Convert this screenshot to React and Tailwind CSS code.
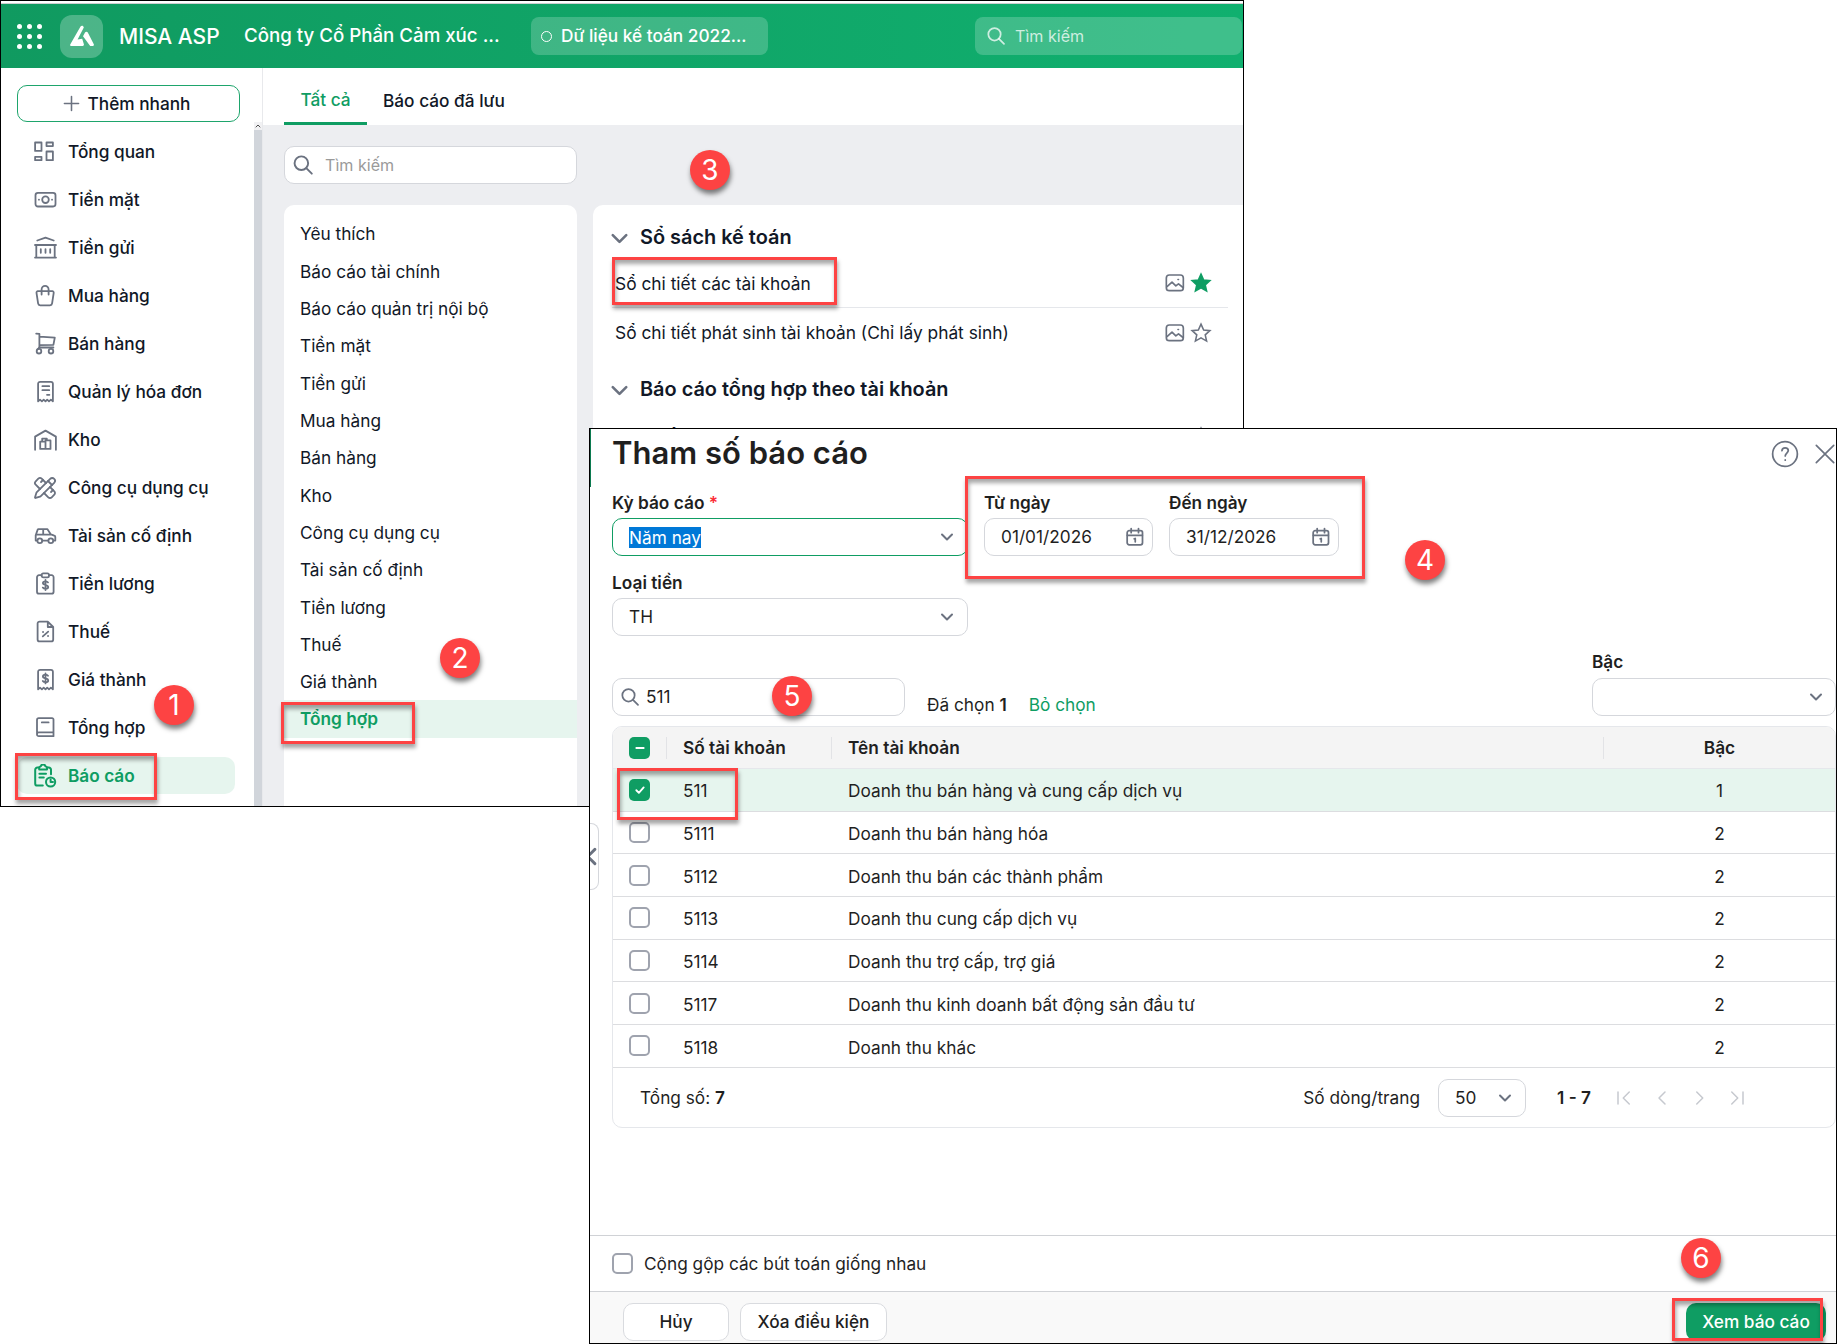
import { ChevronDown, PencilRuler } from "lucide-react";
import clsx from "clsx";

const REPORT_GROUPS = [
    "Yêu thích",
    "Báo cáo tài chính",
    "Báo cáo quản trị nội bộ",
    "Tiền mặt",
    "Tiền gửi",
    "Mua hàng",
    "Bán hàng",
    "Kho",
    "Công cụ dụng cụ",
    "Tài sản cố định",
    "Tiền lương",
    "Thuế",
    "Giá thành",
    "Tổng hợp"
];

const ACCOUNTS = [
    { code: "511", name: "Doanh thu bán hàng và cung cấp dịch vụ", level: 1, checked: true },
    { code: "5111", name: "Doanh thu bán hàng hóa", level: 2 },
    { code: "5112", name: "Doanh thu bán các thành phẩm", level: 2 },
    { code: "5113", name: "Doanh thu cung cấp dịch vụ", level: 2 },
    { code: "5114", name: "Doanh thu trợ cấp, trợ giá", level: 2 },
    { code: "5117", name: "Doanh thu kinh doanh bất động sản đầu tư", level: 2 },
    { code: "5118", name: "Doanh thu khác", level: 2 }
];

function Glyph({ children, className = "size-6", strokeWidth = 1.8 }) {
    return (
        <svg
            viewBox="0 0 24 24"
            fill="none"
            stroke="currentColor"
            strokeWidth={strokeWidth}
            strokeLinecap="round"
            strokeLinejoin="round"
            className={clsx("shrink-0", className)}
        >
            {children}
        </svg>
    );
}

const DOLLAR = "M15 9.6c-.5-.8-1.4-1.1-2.5-1.1-1.5 0-2.6.7-2.6 1.8 0 2.6 5.3 1.2 5.3 3.9 0 1.1-1.2 1.8-2.7 1.8-1.2 0-2.2-.4-2.7-1.2M12.5 7.2v10";
const TORN_PAPER = "M5.1 21.3V3.8a2 2 0 0 1 2-2h10.8a2 2 0 0 1 2 2v17.5l-2-1.7-1.9 1.7-1.8-1.7-1.7 1.7-1.8-1.7-1.8 1.7-1.9-1.7z";

const NAV_ITEMS = [
    {
        label: "Tổng quan",
        icon: (
            <Glyph>
                <path d="M2.1 2.5h6.4v8.4H2.1zM13.5 2.5h6.4v3.6h-6.4zM2.1 16.8h6.4v3.4H2.1zM13.5 11.5h6.4v8.7h-6.4z" />
            </Glyph>
        )
    },
    {
        label: "Tiền mặt",
        icon: (
            <Glyph>
                <rect x="2.5" y="4.9" width="20" height="13.6" rx="2.4" />
                <circle cx="12.5" cy="11.7" r="3.3" />
                <path d="M5.9 11.7h.1M19 11.7h.1" />
            </Glyph>
        )
    },
    {
        label: "Tiền gửi",
        icon: (
            <Glyph>
                <path d="M4.3 4.5l8.2-2.9 8.2 2.9M2 9h21M3.3 9v12.4M21.7 9v12.4M2 21.6h21M7.8 13.2v3.6M12.5 13.2v3.6M17.2 13.2v3.6" />
            </Glyph>
        )
    },
    {
        label: "Mua hàng",
        icon: (
            <Glyph>
                <path d="M4.8 7.2h14.6a1.4 1.4 0 0 1 1.3 1.6l-1.6 10.6a2.2 2.2 0 0 1-2.1 1.9H7.2a2.2 2.2 0 0 1-2.1-1.9L3.5 8.8a1.4 1.4 0 0 1 1.3-1.6z" />
                <path d="M8.6 10.6V5.4a3.5 3.5 0 0 1 7 0v5.2" />
            </Glyph>
        )
    },
    {
        label: "Bán hàng",
        icon: (
            <Glyph>
                <path d="M3.2 1.6l3.2.3v13.6h14M6.4 4.6l15.4 1-1.4 7.2-14 .3" />
                <path d="M6.4 15.5L4.6 17.3" />
                <circle cx="6" cy="19.2" r="2.3" />
                <circle cx="18" cy="19.2" r="2.3" />
            </Glyph>
        )
    },
    {
        label: "Quản lý hóa đơn",
        icon: (
            <Glyph>
                <path d={TORN_PAPER} />
                <path d="M9.4 6.2h6.8M9.4 10.2h6.8M14 14.8h2.4" />
            </Glyph>
        )
    },
    {
        label: "Kho",
        icon: (
            <Glyph>
                <path d="M2.1 21.8V8.6l10.4-6 10.4 6v13.2" />
                <path d="M7.2 13.6h5.3v7.3H7.2zM12.5 12.4h5v8.5h-5zM9.2 13.6v-3h4.6v1.8" />
            </Glyph>
        )
    },
    {
        label: "Công cụ dụng cụ",
        icon: <PencilRuler className="size-6 shrink-0" strokeWidth={1.8} />
    },
    {
        label: "Tài sản cố định",
        icon: (
            <Glyph>
                <path d="M4.2 16.6H2.7v-5.4l2-5.6a.8.8 0 0 1 .8-.5h8.8l3.6 5.3 3.4 1.2a1.4 1.4 0 0 1 1 1.4v3.6h-1.4M9.4 16.6h5.8M3 10.6h14.6M10.2 5.3v5.2" />
                <circle cx="6.8" cy="16.7" r="2.4" />
                <circle cx="17.8" cy="16.7" r="2.4" />
            </Glyph>
        )
    },
    {
        label: "Tiền lương",
        icon: (
            <Glyph>
                <path d="M8.6 3.2H6a2 2 0 0 0-2 2v14.5a2 2 0 0 0 2 2h12.6a2 2 0 0 0 2-2V5.2a2 2 0 0 0-2-2H16" />
                <rect x="8.6" y="1.4" width="7.4" height="4" rx="1.6" />
                <path d={DOLLAR} transform="translate(0 .8)" />
            </Glyph>
        )
    },
    {
        label: "Thuế",
        icon: (
            <Glyph>
                <path d="M14.8 1.6H6.6a2 2 0 0 0-2 2v15.8a2 2 0 0 0 2 2h11.6a2 2 0 0 0 2-2V7zM14.8 1.6V7h5.4M9.8 16.4l5.4-4.8M10 12h.1M15 16h.1" />
            </Glyph>
        )
    },
    {
        label: "Giá thành",
        icon: (
            <Glyph>
                <path d={TORN_PAPER} />
                <path d={DOLLAR} transform="translate(0 -1.8)" />
            </Glyph>
        )
    },
    {
        label: "Tổng hợp",
        icon: (
            <Glyph>
                <path d="M20.5 16.4V3.6a1.4 1.4 0 0 0-1.4-1.4H5.8A1.8 1.8 0 0 0 4 4v14.4a1.8 1.8 0 0 0 1.8 1.8h14.7v-3.8H5.6A1.7 1.7 0 0 0 4 18M8.8 6.4h6.8" />
            </Glyph>
        )
    },
    {
        label: "Báo cáo",
        active: true,
        icon: (
            <Glyph strokeWidth={2}>
                <path d="M6.2 3.6H4.4A2.2 2.2 0 0 0 2.2 5.8v13.6a2.2 2.2 0 0 0 2.2 2.2h5.4M14 3.6h1.8A2.2 2.2 0 0 1 18 5.8v4.4" />
                <path d="M6.2 4.6a2 2 0 0 1 1.6-2.4 2.4 2.4 0 0 1 4.6 0A2 2 0 0 1 14 4.6v.8H6.2zM6.4 9.8h6.6M6.4 13.6h4.4" />
                <circle cx="17.6" cy="18" r="4.6" />
                <path d="M17.6 15.6V18H20" />
            </Glyph>
        )
    }
];

function SearchIcon({ className }) {
    return (
        <Glyph className={className} strokeWidth={2.1}>
            <circle cx="10.2" cy="10" r="7.4" />
            <path d="M15.6 15.4l6 6" />
        </Glyph>
    );
}

function CalendarIcon() {
    return (
        <Glyph className="size-5 text-[#6b7280]" strokeWidth={2.1}>
            <rect x="2.6" y="4.4" width="18.4" height="17" rx="2.4" />
            <path d="M7.4 1.8v5M16.2 1.8v5M2.8 10h18M11 14.2l1.3-.4v4" />
        </Glyph>
    );
}

function PreviewIcon() {
    return (
        <Glyph className="size-5 text-[#6b7280]" strokeWidth={2}>
            <rect x="1.6" y="2.4" width="20.4" height="18.8" rx="3.6" />
            <path d="M2.4 16.4l6-5.4 4.6 4.4 3.2-2.4 5.4 4.4M15.6 7.8h.6" />
        </Glyph>
    );
}

function StarIcon({ filled }) {
    return (
        <Glyph className={filled ? "size-[22px] text-[#0f9d63]" : "size-[22px] text-[#6b7280]"} strokeWidth={1.7}>
            <path
                d="M12 2.4l2.9 6.3 6.8.7-5.1 4.6 1.5 6.8L12 17.3l-6.1 3.5 1.5-6.8-5.1-4.6 6.8-.7z"
                fill={filled ? "currentColor" : "none"}
                strokeLinejoin="miter"
            />
        </Glyph>
    );
}

function Checkbox({ state }) {
    if (!state) {
        return <span className="h-[21px] w-[21px] shrink-0 rounded-[5px] border-2 border-[#9fa3ae] bg-white" />;
    }
    return (
        <span className="flex h-[22px] w-[21px] shrink-0 items-center justify-center rounded-[5px] bg-[#0f9d63] text-white">
            <Glyph className="size-4" strokeWidth={2.8}>
                <path d={state === "mixed" ? "M6.5 12h11" : "M6.5 12.4l3.8 3.8 7.2-8"} />
            </Glyph>
        </span>
    );
}

function TopBar() {
    return (
        <header className="flex h-16 shrink-0 items-center bg-linear-to-r from-[#109a60] to-[#10b06f] text-white">
            <div className="ml-4 grid w-[25px] grid-cols-3 gap-[5px]">
                {Array.from({ length: 9 }, (_, i) => (
                    <span key={i} className="size-[5px] rounded-full bg-white" />
                ))}
            </div>
            <div className="ml-[18px] flex size-[43px] items-center justify-center rounded-xl bg-white/25">
                <svg viewBox="0 0 26 24" className="h-6 w-[26px]" fill="white">
                    <path d="M1.2 20.6L11.4 2.8c.7-1.3 2.7-1.3 3.2.2l.2.6-6.2 11.8 4.6-.6L14.8 20a1.3 1.3 0 0 1-1.2 1.9H2a.9.9 0 0 1-.8-1.3z" />
                    <path d="M14 12.2l2-3.6c.6-1.2 2.2-1.2 2.8 0l6 11.6c.4.8-.1 1.7-1 1.7h-2.6z" />
                </svg>
            </div>
            <span className="ml-4 w-[125px] pt-px text-[21px] font-medium">MISA ASP</span>
            <span className="w-[287px] text-[18.7px] font-medium whitespace-nowrap">Công ty Cổ Phần Cảm xúc ...</span>
            <div className="flex h-[38px] w-[237px] items-center gap-[9px] rounded-lg bg-white/20 pl-2.5 font-medium whitespace-nowrap">
                <span className="size-[11px] rounded-full border border-white" />
                Dữ liệu kế toán 2022...
            </div>
            <div className="mr-px ml-auto flex h-[38px] w-[267px] items-center gap-[9px] rounded-lg bg-white/20 pl-[11px] text-[16.1px] text-white/75">
                <SearchIcon className="size-5" />
                Tìm kiếm
            </div>
        </header>
    );
}

function Sidebar() {
    return (
        <aside className="flex w-[262px] shrink-0 flex-col border-r border-[#e8e9ec] bg-white">
            <button className="mt-[17px] ml-4 flex h-[37px] w-[223px] items-center justify-center gap-2 rounded-[10px] border border-[#1ea56c] pr-1 font-medium">
                <Glyph className="size-[17px] text-[#6b7280]" strokeWidth={2.2}>
                    <path d="M12 2v20M2 12h20" />
                </Glyph>
                Thêm nhanh
            </button>
            <div className="flex min-h-0 flex-1">
                <nav className="w-[253px] overflow-hidden pt-[11px] font-medium">
                    {NAV_ITEMS.map((item) => (
                        <a
                            key={item.label}
                            className={clsx(
                                "mb-[11px] ml-4 flex h-[37px] w-[218px] items-center gap-[11px] rounded-[10px] pl-4",
                                item.active && "bg-[#e6f5ee] font-semibold text-[#0f9d63]"
                            )}
                        >
                            <span className={item.active ? "text-[#0f9d63]" : "text-[#6b7280]"}>{item.icon}</span>
                            {item.label}
                        </a>
                    ))}
                </nav>
                <div className="w-2 bg-[#d1d5db]">
                    <div className="flex h-2 items-center justify-center bg-[#f1f1f3] text-[#505050]">
                        <Glyph className="size-1.5" strokeWidth={4}>
                            <path d="M4 16l8-8 8 8" />
                        </Glyph>
                    </div>
                </div>
            </div>
        </aside>
    );
}

function ReportSection({ title, children, className }) {
    return (
        <section className={className}>
            <h3 className="flex h-8 items-center gap-[7px] text-[19.9px] font-semibold">
                <ChevronDown className="-ml-[3px] size-[27px] text-[#6b7280]" strokeWidth={2.3} />
                {title}
            </h3>
            {children}
        </section>
    );
}

function ReportRow({ label, starred, divider }) {
    return (
        <div className={clsx("ml-[3px] flex h-[49px] items-center whitespace-nowrap", divider && "border-b border-[#e5e7eb]")}>
            <span className="flex-1 pt-[2px] pl-[3px] text-[17.35px]">{label}</span>
            <span className="mr-4 flex items-center gap-[5px]">
                <PreviewIcon />
                <StarIcon filled={starred} />
            </span>
        </div>
    );
}

function ReportsWindow() {
    return (
        <div className="absolute top-0 left-0 flex h-[807px] w-[1244px] flex-col border border-black bg-white">
            <div className="h-[3px] shrink-0 border-b border-[#cfcfd2]" />
            <TopBar />
            <div className="flex min-h-0 flex-1">
                <Sidebar />
                <main className="flex min-w-0 flex-1 flex-col bg-[#edeef1]">
                    <div className="flex h-[57px] shrink-0 bg-white pl-[21px] font-medium">
                        <span className="flex w-[83px] items-center justify-center border-b-[3px] border-[#0f9d63] pt-2.5 text-[#0f9d63]">
                            Tất cả
                        </span>
                        <span className="flex items-center pt-2 pl-4">Báo cáo đã lưu</span>
                    </div>
                    <div className="mt-[21px] ml-[21px] flex h-[38px] w-[293px] shrink-0 items-center gap-[11px] rounded-[10px] border border-[#d5d7dc] bg-white pl-[7px] text-[16.1px] text-[#9a9a9a]">
                        <SearchIcon className="size-[22px] text-[#6b7280]" />
                        Tìm kiếm
                    </div>
                    <div className="mt-[21px] ml-[21px] flex min-h-0 flex-1 gap-4">
                        <ul className="w-[293px] shrink-0 rounded-t-[10px] bg-white pt-[10px]">
                            {REPORT_GROUPS.map((group) => (
                                <li
                                    key={group}
                                    className={clsx(
                                        "flex h-[37.33px] items-center pt-px pl-4",
                                        group === "Tổng hợp" && "bg-[#e6f5ee] font-semibold text-[#0f9d63]"
                                    )}
                                >
                                    {group}
                                </li>
                            ))}
                        </ul>
                        <div className="min-w-0 flex-1 overflow-hidden rounded-tl-[10px] bg-white pt-[17px] pr-[15px] pl-4">
                            <ReportSection title="Sổ sách kế toán">
                                <div className="h-[5px]" />
                                <ReportRow label="Sổ chi tiết các tài khoản" starred divider />
                                <ReportRow label="Sổ chi tiết phát sinh tài khoản (Chỉ lấy phát sinh)" />
                            </ReportSection>
                            <ReportSection title="Báo cáo tổng hợp theo tài khoản" className="mt-[17px]">
                                <div className="h-[6px]" />
                                <ReportRow label="Bảng tổng hợp" />
                            </ReportSection>
                        </div>
                    </div>
                </main>
            </div>
        </div>
    );
}

function SelectBox({ value, className, selected }) {
    return (
        <div
            className={clsx(
                "flex h-[38px] items-center justify-between rounded-[10px] border bg-white",
                selected ? "border-[#0f9d63]" : "border-[#d5d7dc]",
                className
            )}
        >
            <span className={clsx(selected && "bg-[#0078d7] leading-[21px] text-white")}>{value}</span>
            <ChevronDown className="size-5 text-[#6b7280]" strokeWidth={2.4} />
        </div>
    );
}

function DateField({ label, value, className }) {
    return (
        <div>
            <div className="h-7 text-[17.2px] leading-7 font-semibold">{label}</div>
            <div className={clsx("mt-[1px] flex h-[38px] items-center justify-between rounded-[10px] border border-[#d5d7dc] pl-4", className)}>
                {value}
                <CalendarIcon />
            </div>
        </div>
    );
}

function AccountTable() {
    return (
        <div className="mt-[10px] h-[402px] overflow-hidden rounded-[10px] border border-[#e5e7eb]">
            <div className="flex h-[42px] items-center border-b border-[#e5e7eb] bg-[#f4f4f4] text-[17.3px] font-semibold">
                <div className="flex w-[53px] justify-start pl-4"><Checkbox state="mixed" /></div>
                <div className="flex h-[22px] w-[165px] items-center border-l border-[#e2e3e6] pl-4">Số tài khoản</div>
                <div className="flex h-[22px] flex-1 items-center border-l border-[#e2e3e6] pl-4">Tên tài khoản</div>
                <div className="flex h-[22px] w-[232px] items-center justify-center border-l border-[#e2e3e6]">Bậc</div>
            </div>
            {ACCOUNTS.map((account) => (
                <div
                    key={account.code}
                    className={clsx(
                        "flex h-[42.7px] items-center border-b border-[#dcdde0]",
                        account.checked && "bg-[#e6f5ee]"
                    )}
                >
                    <div className="flex w-[70px] pl-4"><Checkbox state={account.checked} /></div>
                    <div className="w-[165px] pt-[3px]">{account.code}</div>
                    <div className="flex-1 pt-[3px]">{account.name}</div>
                    <div className="w-[231px] pt-[3px] text-center">{account.level}</div>
                </div>
            ))}
            <div className="flex h-[60px] items-center pl-[27px]">
                <span className="flex-1">Tổng số: <b className="font-semibold">7</b></span>
                <span className="mr-[18px]">Số dòng/trang</span>
                <SelectBox value="50" className="w-[88px] pr-2.5 pl-4" />
                <b className="ml-[31px] w-[58px] font-semibold">1 - 7</b>
                <div className="mr-[89px] flex w-[131px] items-center justify-between text-[#c6c9cf]">
                    <Glyph className="size-[18px]" strokeWidth={2}><path d="M4 4v16M19 4l-8 8 8 8" /></Glyph>
                    <Glyph className="size-[18px]" strokeWidth={2}><path d="M16 4l-8 8 8 8" /></Glyph>
                    <Glyph className="size-[18px]" strokeWidth={2}><path d="M9 4l8 8-8 8" /></Glyph>
                    <Glyph className="size-[18px]" strokeWidth={2}><path d="M5 4l8 8-8 8M20 4v16" /></Glyph>
                </div>
            </div>
        </div>
    );
}

function ParamsDialog() {
    return (
        <div className="absolute top-[428px] left-[589px] flex h-[916px] w-[1248px] flex-col border border-black bg-white text-[#1f1f1f]">
            <div className="absolute top-0 left-0 h-[58px] w-px bg-[#0c7a50]" />
            <div className="absolute top-[394px] left-0 flex h-[67px] w-[9px] items-center overflow-hidden rounded-r-lg border border-l-0 border-[#d5d7dc]">
                <Glyph className="-ml-[7px] size-[19px] text-[#6b7280]" strokeWidth={3.6}><path d="M15 3l-9 9 9 9" /></Glyph>
            </div>
            <div className="flex h-[806px] flex-col pl-[22px]">
                <div className="flex h-[49px] items-center">
                    <h2 className="flex-1 pb-[3px] text-[31px] leading-none font-semibold">Tham số báo cáo</h2>
                    <Glyph className="mr-[15px] size-7 text-[#6b7280]" strokeWidth={1.5}>
                        <circle cx="12" cy="12" r="10.6" />
                        <path d="M9.4 9.2c.1-1.6 1.2-2.5 2.7-2.5 1.6 0 2.7 1 2.7 2.4 0 2-2.6 2.3-2.6 4.6M12.2 17.1v.2" />
                    </Glyph>
                    <Glyph className="size-[22px] text-[#6b7280]" strokeWidth={1.8}><path d="M2.5 2.5l19 19M21.5 2.5l-19 19" /></Glyph>
                </div>
                <div className="mt-[11px] flex">
                    <div className="w-[372px]">
                        <div className="h-7 text-[17.3px] leading-7 font-semibold">
                            Kỳ báo cáo <span className="text-red-500">*</span>
                        </div>
                        <SelectBox value="Năm nay" selected className="mt-[1px] w-[356px] pr-2.5 pl-4" />
                    </div>
                    <div className="flex gap-4">
                        <DateField label="Từ ngày" value="01/01/2026" className="w-[169px] pr-[7px]" />
                        <DateField label="Đến ngày" value="31/12/2026" className="w-[170px] pr-[7px]" />
                    </div>
                </div>
                <div className="mt-[13px] h-7 text-[17.3px] leading-7 font-semibold">Loại tiền</div>
                <SelectBox value="TH" className="mt-[1px] w-[356px] pr-2.5 pl-4" />
                <div className="mt-[13px] flex items-end">
                    <div className="flex h-[38px] w-[293px] items-center gap-1.5 rounded-[10px] border border-[#d5d7dc] pl-[7px]">
                        <SearchIcon className="size-5 text-[#6b7280]" />
                        511
                    </div>
                    <span className="ml-[22px] leading-[22px]">Đã chọn <b className="font-semibold">1</b></span>
                    <span className="ml-[22px] flex-1 leading-[22px] text-[#0f9d63]">Bỏ chọn</span>
                    <div className="w-[244px]">
                        <div className="h-7 text-[17.2px] leading-[26px] font-semibold">Bậc</div>
                        <SelectBox value="" className="mt-[1px] pr-[9px]" />
                    </div>
                </div>
                <AccountTable />
            </div>
            <div className="flex h-[57px] shrink-0 items-center gap-[11px] border-y border-[#d0d2d6] pl-[22px]">
                <Checkbox />
                <span className="pt-px">Cộng gộp các bút toán giống nhau</span>
            </div>
            <div className="flex flex-1 items-start bg-[#f9f9f9] pt-[11px] pr-2.5 pl-[33px] font-medium">
                <button className="h-[38px] w-[106px] rounded-[10px] border border-[#d9dbdf] bg-white">Hủy</button>
                <button className="ml-[11px] h-[38px] w-[147px] rounded-[10px] border border-[#d9dbdf] bg-white">Xóa điều kiện</button>
                <button className="ml-auto h-[38px] w-[140px] rounded-[10px] bg-[#0f9d63] text-white">Xem báo cáo</button>
            </div>
        </div>
    );
}

function Highlight({ className }) {
    return (
        <div
            className={clsx(
                "absolute border-[3px] border-[#fd4343] shadow-[1px_4px_4px_rgba(0,0,0,0.35),inset_1px_4px_4px_rgba(0,0,0,0.35)]",
                className
            )}
        />
    );
}

function StepBadge({ number, className }) {
    return (
        <div
            className={clsx(
                "absolute flex size-10 items-center justify-center rounded-full bg-[#fd4343] text-[28px] leading-none text-white shadow-[1px_4px_5px_rgba(0,0,0,0.5)]",
                className
            )}
        >
            {number}
        </div>
    );
}

export default function App() {
    return (
        <div className="relative h-[1344px] w-[1837px] overflow-hidden bg-white font-['Inter',sans-serif] text-[17.25px] text-[#111827]">
            <ReportsWindow />
            <ParamsDialog />

            <Highlight className="top-[753px] left-[15px] h-[47px] w-[142px]" />
            <Highlight className="top-[702px] left-[281px] h-[42px] w-[134px]" />
            <Highlight className="top-[257px] left-[612px] h-[48px] w-[225px]" />
            <Highlight className="top-[476px] left-[965px] h-[103px] w-[400px]" />
            <Highlight className="top-[768px] left-[617px] h-[52px] w-[121px]" />
            <Highlight className="top-[1298px] left-[1672px] h-[43px] w-[151px]" />

            <StepBadge number={1} className="top-[685px] left-[154px]" />
            <StepBadge number={2} className="top-[638px] left-[440px]" />
            <StepBadge number={3} className="top-[150px] left-[690px]" />
            <StepBadge number={4} className="top-[540px] left-[1405px]" />
            <StepBadge number={5} className="top-[676px] left-[772px]" />
            <StepBadge number={6} className="top-[1238px] left-[1681px]" />
        </div>
    );
}
